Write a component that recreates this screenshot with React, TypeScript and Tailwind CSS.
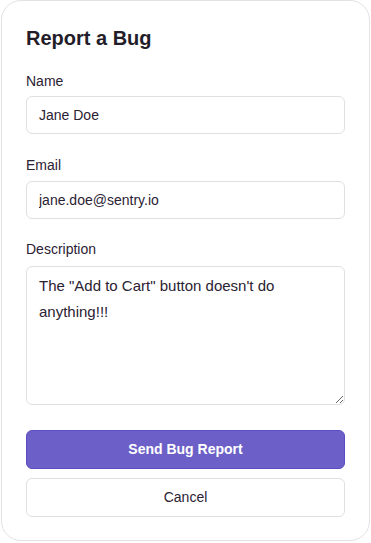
import React from "react";

export default function App() {
  return (
    <div
      className="w-[371px] h-[543px] bg-white text-[#2b2233]"
      style={{ fontFamily: '"Liberation Sans", Arial, sans-serif' }}
    >
      <div className="ml-[1px] w-[369px] h-[541px] rounded-[20px] border-[1.5px] border-[#e2e2e2] bg-white px-6 pt-[23px] pb-[22px] flex flex-col">
        <h2 className="text-[20px] leading-7 font-bold text-[#231d29]">Report a Bug</h2>
        <div className="mt-[19px] flex flex-col">
          <label className="text-[14px] leading-5 mb-[5px]">Name</label>
          <input
            defaultValue="Jane Doe"
            className="h-[38px] w-full rounded-[6px] border-[1.5px] border-[#e0e0e0] px-3 text-[14px] font-medium text-[#2b2233] outline-none"
          />
        </div>
        <div className="mt-[21px] flex flex-col">
          <label className="text-[14px] leading-5 mb-[6px]">Email</label>
          <input
            defaultValue="jane.doe@sentry.io"
            className="h-[38px] w-full rounded-[6px] border-[1.5px] border-[#e0e0e0] px-3 text-[14px] font-medium text-[#2b2233] outline-none"
          />
        </div>
        <div className="mt-[20px] flex flex-col">
          <label className="text-[14px] leading-5 mb-[7px]">Description</label>
          <textarea
            defaultValue={'The "Add to Cart" button doesn\'t do anything!!!'}
            className="h-[139px] w-full rounded-[6px] border-[1.5px] border-[#e0e0e0] px-3 pt-[6px] text-[15px] leading-[26px] font-medium text-[#2b2233] outline-none"
          />
        </div>
        <button className="mt-[25px] h-[39px] w-full rounded-[6px] border border-[#5a4dc0] bg-[#6c5fc7] text-[14px] font-bold text-white">
          Send Bug Report
        </button>
        <button className="mt-[9px] h-[39px] w-full rounded-[6px] border-[1.5px] border-[#e0e0e0] bg-white text-[14px] text-[#2b2233]">
          Cancel
        </button>
      </div>
    </div>
  );
}
